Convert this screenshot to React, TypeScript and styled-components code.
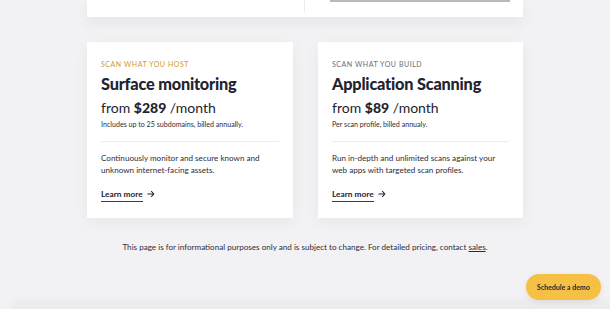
import styled, { createGlobalStyle } from 'styled-components';

const GlobalStyle = createGlobalStyle`
  html, body {
    margin: 0;
    padding: 0;
    background: #f2f2f4;
    font-family: 'Lato', 'Noto Sans', sans-serif;
    color: #23232f;
    overflow: hidden;
  }
`;

const plans = [
  {
    eyebrow: 'Scan what you host',
    accent: true,
    title: 'Surface monitoring',
    price: '$289',
    note: 'Includes up to 25 subdomains, billed annually.',
    desc: 'Continuously monitor and secure known and unknown internet-facing assets.',
  },
  {
    eyebrow: 'Scan what you build',
    accent: false,
    title: 'Application Scanning',
    price: '$89',
    note: 'Per scan profile, billed annualy.',
    desc: 'Run in-depth and unlimited scans against your web apps with targeted scan profiles.',
  },
];

export default function App() {
  return (
    <>
      <GlobalStyle />
      <Page>
        <Wrapper>
          <TopCard>
            <TopLeft />
            <TopRight>
              <TopBar />
            </TopRight>
          </TopCard>

          <Cards>
            {plans.map((p) => (
              <Card key={p.title}>
                <Eyebrow $accent={p.accent}>{p.eyebrow}</Eyebrow>
                <Title>{p.title}</Title>
                <Price>
                  from <strong>{p.price}</strong> /month
                </Price>
                <Note>{p.note}</Note>
                <Divider />
                <Desc>{p.desc}</Desc>
                <LearnMore href="#">
                  <span>Learn more</span>
                  <svg width="8" height="8" viewBox="0 0 10 10" fill="none">
                    <path d="M1 5h7.5M5.5 1.8 8.7 5 5.5 8.2" stroke="#23232f" strokeWidth="1.3" strokeLinecap="round" strokeLinejoin="round" />
                  </svg>
                </LearnMore>
              </Card>
            ))}
          </Cards>

          <Disclaimer>
            This page is for informational purposes only and is subject to change. For detailed pricing, contact <a href="#">sales</a>.
          </Disclaimer>
        </Wrapper>
        <NextSection />
      </Page>
      <DemoButton>Schedule a demo</DemoButton>
    </>
  );
}

const Page = styled.div`
  height: 309px;
  display: flex;
  flex-direction: column;
`;

const Wrapper = styled.div`
  width: 436px;
  margin: 0 auto;
`;

const TopCard = styled.div`
  height: 17px;
  background: #fff;
  box-shadow: 0 6px 14px rgba(30, 30, 50, 0.06);
  display: grid;
  grid-template-columns: 218px 1fr;
`;

const TopLeft = styled.div`
  border-right: 1px solid #ececef;
  height: 12px;
`;

const TopRight = styled.div`
  padding: 0 13px 0 25px;
`;

const TopBar = styled.div`
  height: 2px;
  background: #b9b9c1;
`;

const Cards = styled.div`
  margin-top: 25px;
  display: grid;
  grid-template-columns: 206px 205px;
  gap: 25px;
`;

const Card = styled.div`
  background: #fff;
  height: 176px;
  box-sizing: border-box;
  padding: 18px 14px 0;
  box-shadow: 0 4px 14px rgba(30, 30, 50, 0.05);
  display: flex;
  flex-direction: column;
`;

const Eyebrow = styled.div<{ $accent: boolean }>`
  font-size: 7px;
  line-height: 9px;
  letter-spacing: 0.55px;
  text-transform: uppercase;
  color: ${(p) => (p.$accent ? '#d29b1f' : '#6b6b76')};
`;

const Title = styled.h2`
  margin: 4px 0 0;
  font-size: 16.3px;
  line-height: 21px;
  font-weight: 900;
  letter-spacing: -0.2px;
  color: #23232f;
`;

const Price = styled.div`
  margin-top: 5px;
  font-size: 14px;
  line-height: 17px;
  strong {
    font-weight: 900;
  }
`;

const Note = styled.div`
  margin-top: 4px;
  font-size: 7.1px;
  line-height: 10px;
  color: #2d2d38;
`;

const Divider = styled.div`
  margin-top: 11px;
  height: 1px;
  background: #ececef;
`;

const Desc = styled.p`
  margin: 10px 0 0;
  font-size: 8.1px;
  line-height: 12px;
  color: #2d2d38;
`;

const LearnMore = styled.a`
  margin-top: 13px;
  display: inline-flex;
  align-self: flex-start;
  align-items: center;
  gap: 4px;
  text-decoration: none;
  color: #23232f;
  font-size: 8.3px;
  font-weight: 700;
  span {
    padding-bottom: 2px;
    border-bottom: 1.5px solid #3a3a48;
  }
  svg {
    margin-top: -3px;
  }
`;

const Disclaimer = styled.p`
  margin: 24px -40px 0;
  text-align: center;
  font-size: 8.1px;
  line-height: 10px;
  color: #2d2d38;
  white-space: nowrap;
  a {
    color: inherit;
    text-decoration: underline;
  }
`;

const NextSection = styled.div`
  margin: auto 0 0 12px;
  height: 4px;
  background: #ececef;
  border-radius: 10px 0 0 0;
  box-shadow: 0 -3px 8px rgba(30, 30, 50, 0.07);
`;

const DemoButton = styled.button`
  position: fixed;
  right: 9px;
  bottom: 9px;
  width: 75px;
  height: 26px;
  border: none;
  border-radius: 13px;
  background: #f5c043;
  color: #23232f;
  font-family: 'Lato', 'Noto Sans', sans-serif;
  font-size: 7px;
  font-weight: 700;
  box-shadow: 0 2px 6px rgba(0, 0, 0, 0.08);
  cursor: pointer;
`;
